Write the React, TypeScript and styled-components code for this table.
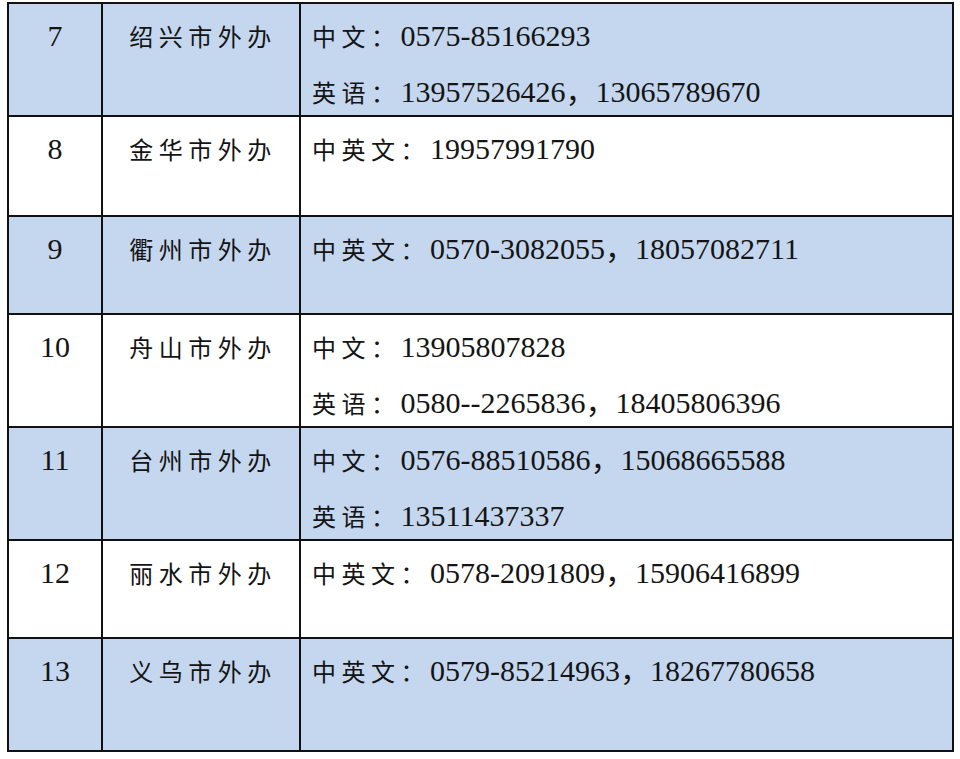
import styled, {createGlobalStyle} from "styled-components";

interface Office{
    no: string;
    name: string;
    lines: {label: string; value: string}[];
    height: number;
    shaded: boolean;
}

const offices: Office[] = [
    {no: "7", name: "绍兴市外办", height: 115, shaded: true, lines: [
        {label: "中文：", value: "0575-85166293"},
        {label: "英语：", value: "13957526426，13065789670"},
    ]},
    {no: "8", name: "金华市外办", height: 100, shaded: false, lines: [
        {label: "中英文：", value: "19957991790"},
    ]},
    {no: "9", name: "衢州市外办", height: 98, shaded: true, lines: [
        {label: "中英文：", value: "0570-3082055，18057082711"},
    ]},
    {no: "10", name: "舟山市外办", height: 113, shaded: false, lines: [
        {label: "中文：", value: "13905807828"},
        {label: "英语：", value: "0580--2265836，18405806396"},
    ]},
    {no: "11", name: "台州市外办", height: 113, shaded: true, lines: [
        {label: "中文：", value: "0576-88510586，15068665588"},
        {label: "英语：", value: "13511437337"},
    ]},
    {no: "12", name: "丽水市外办", height: 98, shaded: false, lines: [
        {label: "中英文：", value: "0578-2091809，15906416899"},
    ]},
    {no: "13", name: "义乌市外办", height: 113, shaded: true, lines: [
        {label: "中英文：", value: "0579-85214963，18267780658"},
    ]},
];

function App(){
    return(
        <>
            <GlobalStyle/>
            <Table>
                {offices.map((o) => (
                    <Row key={o.no} $height={o.height} $shaded={o.shaded}>
                        <NoCell>{o.no}</NoCell>
                        <NameCell>{o.name}</NameCell>
                        <ContactCell>
                            {o.lines.map((l) => (
                                <ContactLine key={l.label + l.value}>
                                    <Label>{l.label}</Label>
                                    <Value>{l.value}</Value>
                                </ContactLine>
                            ))}
                        </ContactCell>
                    </Row>
                ))}
            </Table>
        </>
    )
}

const GlobalStyle = createGlobalStyle`
    html, body{
        background: #ffffff;
    }
    body{
        margin: 2px 0 0 7px;
        color: #141414;
        font-family: "Liberation Serif", "Noto Sans CJK SC", serif;
    }
`

const Table = styled.div`
    width: 947px;
    border-top: 2px solid #111;
    border-left: 2px solid #111;
    box-sizing: border-box;
`

const Row = styled.div<{$height: number; $shaded: boolean}>`
    display: grid;
    grid-template-columns: 94px 198px 1fr;
    height: ${p => p.$height}px;
    background: ${p => p.$shaded ? "#c4d7ee" : "#ffffff"};
    &:first-child{
        height: ${p => p.$height - 2}px;
    }
`

const Cell = styled.div`
    border-right: 2px solid #111;
    border-bottom: 2px solid #111;
    box-sizing: border-box;
    padding-top: 4px;
    line-height: 56px;
    overflow: hidden;
`

const NoCell = styled(Cell)`
    text-align: center;
    font-family: "Liberation Serif", serif;
    font-size: 30px;
`

const NameCell = styled(Cell)`
    text-align: center;
    font-family: "Noto Sans CJK SC", sans-serif;
    font-weight: 400;
    font-size: 24px;
    letter-spacing: 5.5px;
    padding-left: 4px;
`

const ContactCell = styled(Cell)`
    padding-left: 11px;
    display: flex;
    flex-direction: column;
`

const ContactLine = styled.div`
    white-space: nowrap;
    height: 56px;
`

const Label = styled.span`
    font-family: "Noto Sans CJK SC", sans-serif;
    font-weight: 400;
    font-size: 24px;
    letter-spacing: 5.5px;
`

const Value = styled.span`
    font-family: "Liberation Serif", "Noto Sans CJK SC", serif;
    font-size: 30px;
    letter-spacing: 0;
`

export default App;
